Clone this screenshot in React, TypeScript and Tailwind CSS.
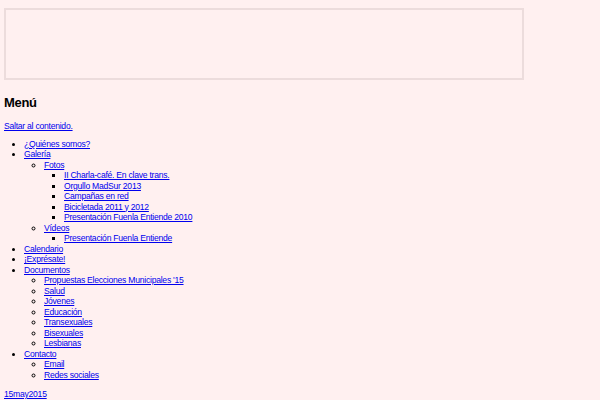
import React from "react";

type Item = { label: string; children?: Item[] };

const menu: Item[] = [
  { label: "¿Quiénes somos?" },
  {
    label: "Galería",
    children: [
      {
        label: "Fotos",
        children: [
          { label: "II Charla-café. En clave trans." },
          { label: "Orgullo MadSur 2013" },
          { label: "Campañas en red" },
          { label: "Bicicletada 2011 y 2012" },
          { label: "Presentación Fuenla Entiende 2010" },
        ],
      },
      { label: "Vídeos", children: [{ label: "Presentación Fuenla Entiende" }] },
    ],
  },
  { label: "Calendario" },
  { label: "¡Exprésate!" },
  {
    label: "Documentos",
    children: [
      { label: "Propuestas Elecciones Municipales '15" },
      { label: "Salud" },
      { label: "Jóvenes" },
      { label: "Educación" },
      { label: "Transexuales" },
      { label: "Bisexuales" },
      { label: "Lesbianas" },
    ],
  },
  { label: "Contacto", children: [{ label: "Email" }, { label: "Redes sociales" }] },
];

function List({ items, depth }: { items: Item[]; depth: number }) {
  const cls =
    depth === 0 ? "list-disc pl-5" : depth === 1 ? "list-[circle] pl-5" : "list-[square] pl-5";
  return (
    <ul className={cls}>
      {items.map((it) => (
        <li key={it.label}>
          <a href="#" className="text-[#0000ee] underline">
            {it.label}
          </a>
          {it.children && <List items={it.children} depth={depth + 1} />}
        </li>
      ))}
    </ul>
  );
}

export default function App() {
  return (
    <div
      className="min-h-[400px] w-[600px] bg-[#fff0f0] px-1 pt-2 text-[8.6px] leading-[10.5px] tracking-[-0.25px] text-black"
      style={{ fontFamily: '"Liberation Sans", Arial, sans-serif' }}
    >
      <div className="h-[72px] w-[520px] border-2 border-[#ecdcdc]" />
      <h2 className="mt-[15px] text-[13px] font-bold leading-[16px] tracking-[-0.3px]">Menú</h2>
      <a href="#" className="mt-[10px] block w-fit text-[#0000ee] underline">
        Saltar al contenido.
      </a>
      <div className="mt-[7px]">
        <List items={menu} depth={0} />
      </div>
      <a href="#" className="mt-[9px] block w-fit text-[#0000ee] underline">
        15may2015
      </a>
    </div>
  );
}
